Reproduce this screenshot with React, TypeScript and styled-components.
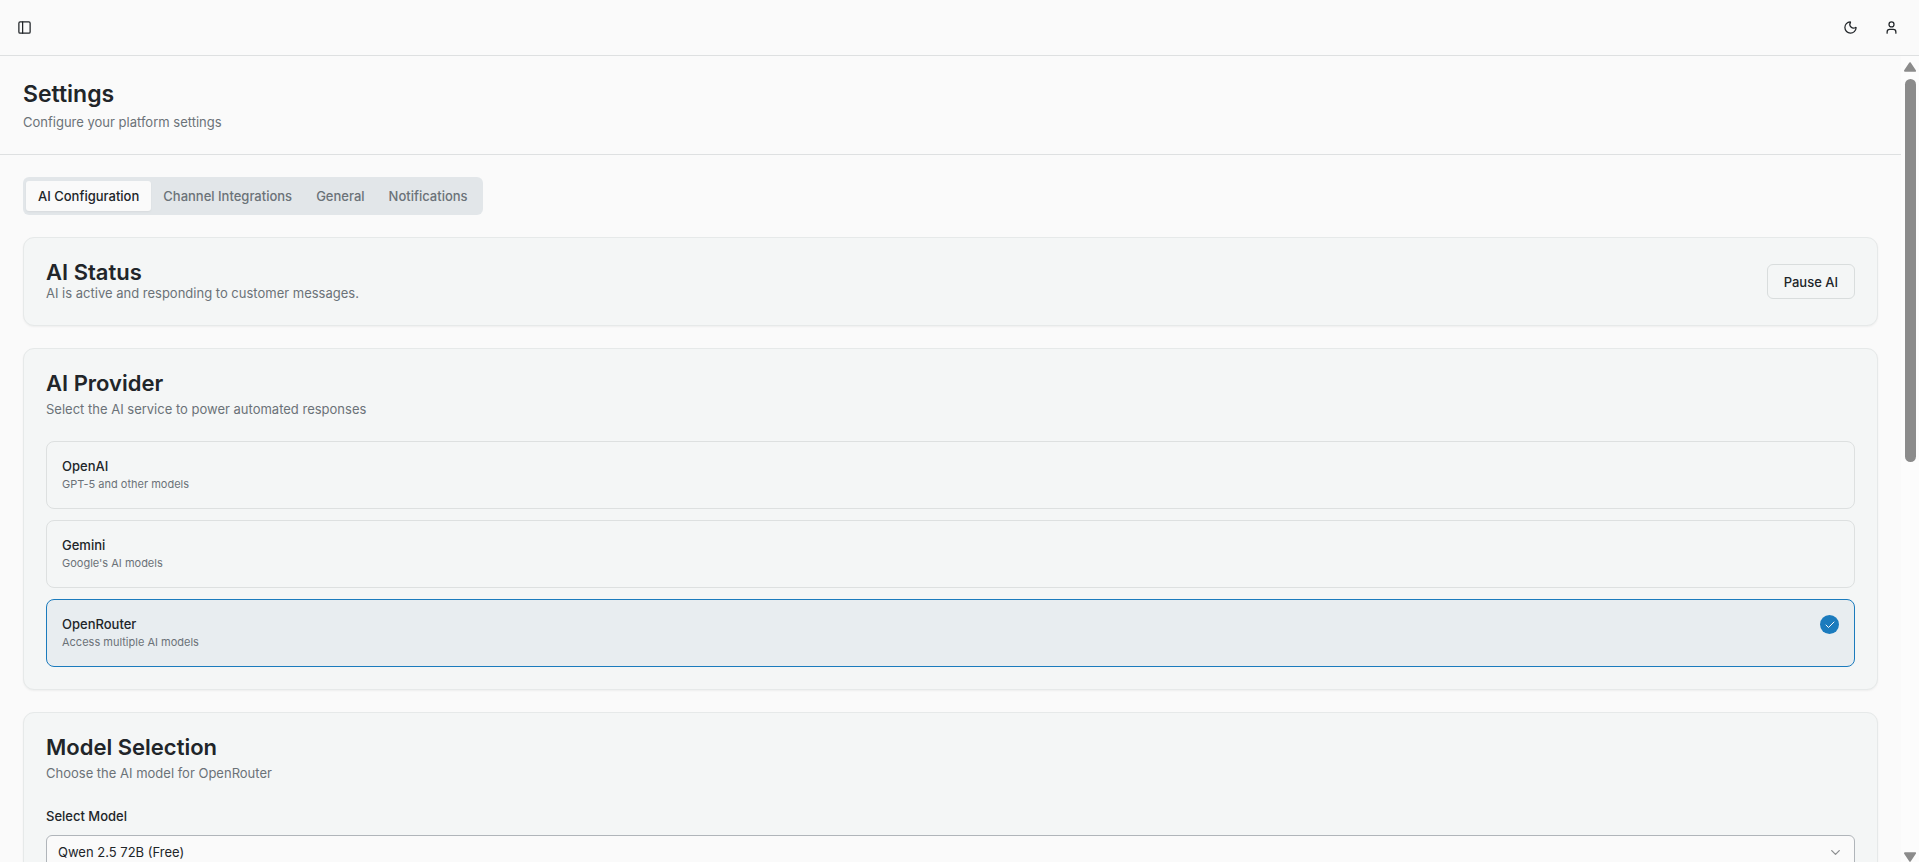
import React, { useState } from 'react';
import styled, { createGlobalStyle } from 'styled-components';
import { Check, ChevronDown, Moon, PanelLeft, User } from 'lucide-react';

const tabs = ['AI Configuration', 'Channel Integrations', 'General', 'Notifications']

const providers = [
    { id: 'openai', name: 'OpenAI', description: 'GPT-5 and other models' },
    { id: 'gemini', name: 'Gemini', description: "Google's AI models" },
    { id: 'openrouter', name: 'OpenRouter', description: 'Access multiple AI models' },
]

const App = () => {
    const [activeTab, setActiveTab] = useState(tabs[0])
    const [provider, setProvider] = useState('openrouter')
    const [isPaused, setIsPaused] = useState(false)
    const selected = providers.find(p => p.id === provider)

    return (
        <Page>
            <GlobalStyle />
            <TopBar>
                <IconButton aria-label='Toggle sidebar' small><PanelLeft size={15} /></IconButton>
                <TopActions>
                    <IconButton aria-label='Toggle theme'><Moon size={15} /></IconButton>
                    <IconButton aria-label='Account'><User size={15} /></IconButton>
                </TopActions>
            </TopBar>
            <Body>
                <Main>
                    <PageHeader>
                        <h1>Settings</h1>
                        <p>Configure your platform settings</p>
                    </PageHeader>
                    <Content>
                        <TabList role='tablist'>
                            {tabs.map(tab => (
                                <Tab key={tab} role='tab' aria-selected={tab === activeTab} active={tab === activeTab} onClick={() => setActiveTab(tab)}>{tab}</Tab>
                            ))}
                        </TabList>
                        <Card>
                            <StatusRow>
                                <div>
                                    <CardTitle>AI Status</CardTitle>
                                    <CardText>{isPaused ? 'AI is paused.' : 'AI is active and responding to customer messages.'}</CardText>
                                </div>
                                <OutlineButton onClick={() => setIsPaused(!isPaused)}>{isPaused ? 'Resume AI' : 'Pause AI'}</OutlineButton>
                            </StatusRow>
                        </Card>
                        <Card>
                            <CardHeader>
                                <CardTitle>AI Provider</CardTitle>
                                <CardText>Select the AI service to power automated responses</CardText>
                            </CardHeader>
                            <Options role='radiogroup' aria-label='AI Provider'>
                                {providers.map(({ id, name, description }) => (
                                    <Option key={id} selected={id === provider}>
                                        <input type='radio' name='provider' value={id} checked={id === provider} onChange={() => setProvider(id)} />
                                        <div>
                                            <OptionName>{name}</OptionName>
                                            <OptionText>{description}</OptionText>
                                        </div>
                                        {id === provider && <Tick><Check size={12} /></Tick>}
                                    </Option>
                                ))}
                            </Options>
                        </Card>
                        <Card>
                            <CardHeader>
                                <CardTitle>Model Selection</CardTitle>
                                <CardText>Choose the AI model for {selected?.name}</CardText>
                            </CardHeader>
                            <Field>
                                <label htmlFor='model'>Select Model</label>
                                <SelectBox>
                                    <select id='model'>
                                        <option>Qwen 2.5 72B (Free)</option>
                                    </select>
                                    <ChevronDown size={15} />
                                </SelectBox>
                            </Field>
                        </Card>
                    </Content>
                </Main>
                <Scrollbar aria-hidden='true'>
                    <svg width='12' height='10' viewBox='0 0 12 10'><path d='M6 1.2 L11 8.8 H1 Z' /></svg>
                    <Track><Thumb /></Track>
                    <svg width='12' height='10' viewBox='0 0 12 10'><path d='M6 8.8 L11 1.2 H1 Z' /></svg>
                </Scrollbar>
            </Body>
        </Page>
    )
}

export default App

const GlobalStyle = createGlobalStyle`
    *{
        box-sizing:border-box;
    }
    body{
        margin:0;
        background-color:#fafafa;
        color:#212529;
        font-family:Inter, sans-serif;
        font-size:13px;
        line-height:19px;
    }
    h1, h2, p{
        margin:0;
    }
    button, select{
        font-family:inherit;
        font-size:inherit;
        color:inherit;
    }
`
const Page = styled.div`
    display:flex;
    flex-direction:column;
    height:100vh;
    overflow:hidden;
`
const TopBar = styled.header`
    display:flex;
    align-items:center;
    justify-content:space-between;
    flex-shrink:0;
    height:56px;
    padding:0 11px;
    border-bottom:1px solid #dee0e1;
`
const TopActions = styled.div`
    display:flex;
    gap:7px;
`
const IconButton = styled.button.withConfig({ shouldForwardProp: prop => prop !== 'small' })<{ small?: boolean }>`
    display:flex;
    align-items:center;
    justify-content:center;
    width:${props => (props.small ? '27px' : '34px')};
    height:${props => (props.small ? '27px' : '34px')};
    padding:0;
    border:none;
    border-radius:6px;
    background:none;
`
const Body = styled.div`
    display:flex;
    flex:1;
    min-height:0;
`
const Main = styled.main`
    flex:1;
    min-width:0;
    overflow-y:auto;
    scrollbar-width:none;
`
const PageHeader = styled.div`
    display:flex;
    flex-direction:column;
    gap:3px;
    padding:22px 23px;
    border-bottom:1px solid #dee0e1;
    h1{
        font-size:23px;
        line-height:32px;
        font-weight:600;
    }
    p{
        color:#6b7278;
    }
`
const Content = styled.div`
    display:flex;
    flex-direction:column;
    align-items:stretch;
    gap:22px;
    padding:22px 23px;
`
const TabList = styled.div`
    display:flex;
    align-self:flex-start;
    padding:4px 3px;
    border-radius:6px;
    background-color:#e2e6e9;
`
const Tab = styled.button.withConfig({ shouldForwardProp: prop => prop !== 'active' })<{ active: boolean }>`
    height:30px;
    padding:0 12px;
    border:none;
    border-radius:3px;
    font-weight:500;
    color:${props => (props.active ? '#212529' : '#6b7278')};
    background-color:${props => (props.active ? '#fafafa' : 'transparent')};
    ${props => (props.active && `box-shadow: 0 1px 2px rgba(0,0,0,0.05)`)};
`
const Card = styled.section`
    display:flex;
    flex-direction:column;
    gap:22px;
    padding:22px;
    border:1px solid #e6e9e9;
    border-radius:11px;
    background-color:#f4f6f6;
    box-shadow:0 1px 2px rgba(0,0,0,0.05);
`
const CardHeader = styled.div`
    display:flex;
    flex-direction:column;
    gap:5px;
`
const StatusRow = styled.div`
    display:flex;
    align-items:center;
    justify-content:space-between;
`
const CardTitle = styled.h2`
    font-size:22px;
    line-height:24px;
    font-weight:600;
`
const CardText = styled.p`
    color:#6b7278;
`
const OutlineButton = styled.button`
    height:35px;
    padding:0 16px;
    border:1px solid #d9dddd;
    border-radius:6px;
    background:none;
    font-weight:500;
`
const Options = styled.div`
    display:flex;
    flex-direction:column;
    gap:11px;
`
const Option = styled.label.withConfig({ shouldForwardProp: prop => prop !== 'selected' })<{ selected: boolean }>`
    display:flex;
    align-items:flex-start;
    justify-content:space-between;
    position:relative;
    padding:15px;
    border:1px solid ${props => (props.selected ? '#1b7bbd' : '#dde0e0')};
    border-radius:8px;
    background-color:${props => (props.selected ? '#e8edf0' : 'transparent')};
    input{
        position:absolute;
        margin:0;
        opacity:0;
    }
`
const OptionName = styled.div`
    font-weight:500;
`
const OptionText = styled.div`
    font-size:11px;
    line-height:17px;
    color:#6b7278;
`
const Tick = styled.span`
    display:flex;
    align-items:center;
    justify-content:center;
    width:19px;
    height:19px;
    border-radius:50%;
    background-color:#1b7bbd;
    color:#fafafa;
`
const Field = styled.div`
    display:flex;
    flex-direction:column;
    gap:7px;
    label{
        line-height:23px;
        font-weight:500;
    }
`
const SelectBox = styled.div`
    position:relative;
    select{
        appearance:none;
        width:100%;
        height:34px;
        padding:0 11px;
        border:1px solid #b0b5ba;
        border-radius:6px;
        background-color:#fafafa;
    }
    svg{
        position:absolute;
        top:10px;
        right:12px;
        opacity:0.5;
        pointer-events:none;
    }
`
const Scrollbar = styled.div`
    display:flex;
    flex-direction:column;
    align-items:center;
    gap:7px;
    width:18px;
    padding-top:6px;
    background-color:#fcfcfc;
    svg{
        flex-shrink:0;
        fill:#8b8b8b;
        stroke:#8b8b8b;
        stroke-width:2;
        stroke-linejoin:round;
    }
`
const Track = styled.div`
    flex:1;
    width:11px;
`
const Thumb = styled.div`
    height:50%;
    border-radius:6px;
    background-color:#8b8b8b;
`
